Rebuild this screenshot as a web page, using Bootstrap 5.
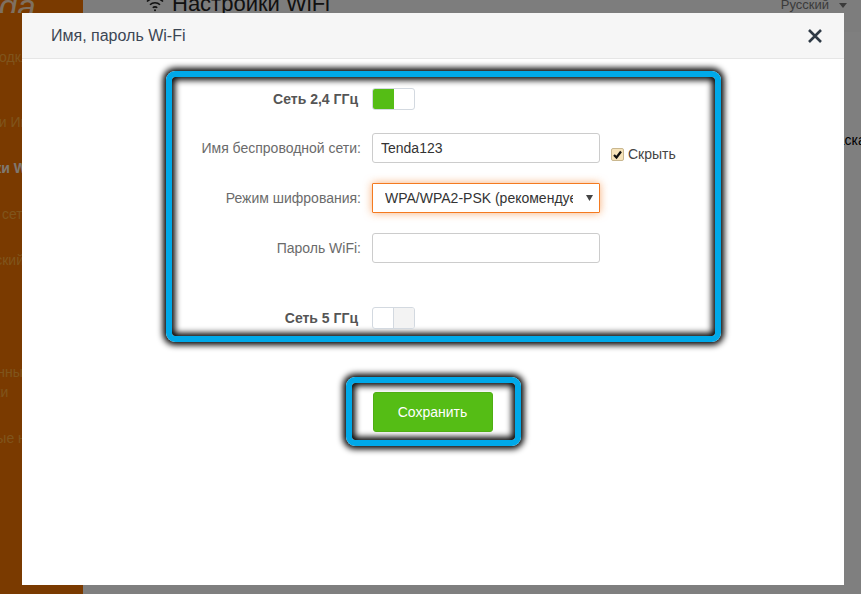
<!DOCTYPE html>
<html lang="ru">
<head>
    <meta charset="UTF-8">
    <title>Настройки WiFi</title>
    <meta name="viewport" content="width=device-width, initial-scale=1">
    <link href="https://cdn.jsdelivr.net/npm/bootstrap@5.3.0/dist/css/bootstrap.min.css" rel="stylesheet">
    <style>
        html, body { height: 100%; overflow: hidden; }
        body { font-family: "Liberation Sans", Arial, sans-serif; font-size: 14px; color: #333; background: #fff; }

        /* page behind the dialog */
        .side-menu { width: 83px; height: 594px; background: #f47400; color: #ffa838; overflow: hidden; white-space: nowrap; flex: none; }
        .side-logo { font-size: 33px; font-style: italic; line-height: 13px; height: 13px; overflow: hidden; margin: 0 0 36px -55px; color: #ffe0c0; }
        .side-item { font-size: 14px; line-height: 16px; height: 46px; }
        .side-item.current { font-weight: 700; color: #fff0e0; }
        .item-tall { height: 65px; }
        .item-short { height: 20px; margin-top: 66px; }
        .shift-a { margin-left: -11px; }
        .shift-b { margin-left: -62px; }
        .shift-c { margin-left: -64px; }
        .shift-d { margin-left: -60px; }
        .shift-e { margin-left: -66px; }
        .shift-f { margin-left: -61px; }
        .shift-g { margin-left: -58px; }
        .shift-h { margin-left: -60px; }
        .main-area { flex: 1; min-width: 0; overflow: hidden; white-space: nowrap; }
        .top-line { height: 33px; background: #fafafa; border-bottom: 1px solid #fff; overflow: hidden; }
        .page-title { font-size: 22px; line-height: 22px; margin: -7px 0 0 63px; color: #222; }
        .lang-pick { margin-left: auto; margin-right: 14px; margin-top: -3px; line-height: 16px; color: #777; font-size: 13px; }
        .lang-caret { display: inline-block; margin-left: 10px; border: 4px solid transparent; border-top: 5px solid #777; border-bottom: 0; vertical-align: middle; }
        .page-note { padding: 99px 0 0 742px; color: #000; line-height: 16px; }

        /* dialog */
        .wifi-dialog { max-width: none; width: 822px; margin: 13px 0 0 22px; }
        .wifi-dialog .modal-content { height: 572px; border: 0; border-radius: 0; }
        .wifi-dialog .modal-header { height: 46px; padding: 0 22px 0 29px; background: #f6f6f6; border-bottom: 1px solid #e6e6e6; border-radius: 0; }
        .dlg-title { font-size: 16px; font-weight: 400; color: #3c4654; margin: 0; line-height: 20px; }
        .dlg-close { background: none; border: 0; padding: 0; line-height: 0; }
        .wifi-dialog .modal-body { padding: 12px 0 0; }

        /* annotation frames */
        .mark-frame { border: 6px solid #00a9e9; border-radius: 9px; box-shadow: 0 0 6px 3px #000, inset 0 0 6px 3px #000; }
        .frame-form { width: 555px; height: 271px; margin-left: 144px; padding-top: 11px; }
        .frame-save { width: 175px; height: 69px; margin-top: 35px; padding: 9px 0 0 21px; }

        /* form rows */
        .form-line { display: flex; gap: 11px; }
        .gap-first { margin-top: 23px; }
        .gap-row { margin-top: 20px; }
        .gap-last { margin-top: 44px; }
        .line-label { width: 189px; flex: none; text-align: right; color: #6b6b6b; line-height: 30px; margin: 0; }
        .line-label.strong { font-weight: 700; color: #555; line-height: 22px; padding-right: 3px; }
        .wifi-input { width: 228px; height: 30px; padding: 0 8px; font-size: 14px; color: #333; border: 1px solid #ccc; border-radius: 3px; box-shadow: none; }
        .wifi-select { width: 228px; height: 30px; padding: 0 26px 0 12px; font-size: 14px; color: #333; border: 1px solid #f47a20; border-radius: 1px; box-shadow: 0 0 8px rgba(244,122,32,.6);
            background-size: 7px 6px; background-position: right 6px center;
            background-image: url("data:image/svg+xml,%3csvg xmlns='http://www.w3.org/2000/svg' viewBox='0 0 7 6'%3e%3cpath fill='%23444' d='M0 0h7L3.500 6z'/%3e%3c/svg%3e"); }
        .wifi-select:focus { border-color: #f47a20; box-shadow: 0 0 8px rgba(244,122,32,.6); }
        .hide-check { margin: 12px 0 0 0; min-height: 0; padding: 0; display: flex; align-items: center; gap: 4px; color: #444; }
        .hide-check .form-check-input { float: none; margin: 0; width: 13px; height: 13px; border: 1px solid #c9b78f; border-radius: 2px; background-color: #f6e3ba; background-size: 13px;
            background-image: url("data:image/svg+xml,%3csvg xmlns='http://www.w3.org/2000/svg' viewBox='0 0 13 13'%3e%3cpath fill='none' stroke='%23111' stroke-width='2.200' d='M3 7l2.500 2.500L10 3.500'/%3e%3c/svg%3e"); }
        .hide-check label { line-height: 16px; }

        /* two part switch */
        .split-toggle { width: 43px; height: 22px; display: flex; border: 1px solid #d3d9e0; border-radius: 3px; overflow: hidden; background: #fff; }
        .split-toggle span { flex: 1; }
        .split-toggle .on-part { background: #55bd15; }
        .split-toggle .off-part { background: #f3f3f3; border-left: 1px solid #d3d9e0; }

        .save-btn { width: 120px; height: 40px; padding: 0; font-size: 14px; color: #fff; background: #55bd15; border: 1px solid #4fae13; border-radius: 3px; }
        .modal-backdrop.show { opacity: .5; }
    </style>
</head>
<body>

<!-- страница под диалогом -->
<div class="d-flex">
    <div class="side-menu">
        <div class="side-logo">Tenda</div>
        <div class="side-item item-tall shift-a">Подключение</div>
        <div class="side-item shift-b">Настройки Интернета</div>
        <div class="side-item current shift-c">Настройки WiFi</div>
        <div class="side-item shift-d">Гостевая сеть</div>
        <div class="side-item shift-e">Родительский контроль</div>
        <div class="side-item item-short shift-f">Расширенные</div>
        <div class="side-item shift-g">настройки</div>
        <div class="side-item shift-h">Системные настройки</div>
    </div>
    <div class="main-area">
        <div class="top-line d-flex align-items-start">
            <div class="page-title d-flex align-items-center gap-2">
                <svg width="18" height="16" viewBox="0 0 18 16" fill="none" stroke="#222" stroke-width="1.600"><path d="M1 5.500a11.500 11.500 0 0 1 16 0"/><path d="M4 8.800a7 7 0 0 1 10 0"/><path d="M6.800 11.800a3 3 0 0 1 4.400 0"/><circle cx="9" cy="14.200" r="1" fill="#222" stroke="none"/></svg>
                <span>Настройки WiFi</span>
            </div>
            <div class="lang-pick">Русский<span class="lang-caret"></span></div>
        </div>
        <div class="page-note">Маска</div>
    </div>
</div>

<div class="modal-backdrop show"></div>

<!-- диалог -->
<div class="modal show d-block" tabindex="-1">
    <div class="modal-dialog wifi-dialog">
        <div class="modal-content">
            <div class="modal-header">
                <h5 class="dlg-title">Имя, пароль Wi-Fi</h5>
                <button type="button" class="dlg-close ms-auto" aria-label="Закрыть">
                    <svg width="14" height="14" viewBox="0 0 14 14" stroke="#2f3a46" stroke-width="2.600"><path d="M1 1l12 12M13 1L1 13"/></svg>
                </button>
            </div>
            <div class="modal-body d-flex flex-column align-items-center">
                <div class="mark-frame frame-form align-self-start">
                    <div class="form-line">
                        <p class="line-label strong">Сеть 2,4 ГГц</p>
                        <div class="split-toggle"><span class="on-part"></span><span></span></div>
                    </div>
                    <div class="form-line gap-first">
                        <label class="line-label" for="ssid">Имя беспроводной сети:</label>
                        <input class="form-control wifi-input" id="ssid" type="text" value="Tenda123">
                        <div class="form-check hide-check">
                            <input class="form-check-input" id="hide" type="checkbox" checked>
                            <label for="hide">Скрыть</label>
                        </div>
                    </div>
                    <div class="form-line gap-row">
                        <label class="line-label" for="mode">Режим шифрования:</label>
                        <select class="form-select wifi-select" id="mode">
                            <option>WPA/WPA2-PSK (рекомендуется)</option>
                        </select>
                    </div>
                    <div class="form-line gap-row">
                        <label class="line-label" for="pass">Пароль WiFi:</label>
                        <input class="form-control wifi-input" id="pass" type="text">
                    </div>
                    <div class="form-line gap-last">
                        <p class="line-label strong">Сеть 5 ГГц</p>
                        <div class="split-toggle"><span></span><span class="off-part"></span></div>
                    </div>
                </div>
                <div class="mark-frame frame-save">
                    <button type="button" class="btn save-btn">Сохранить</button>
                </div>
            </div>
        </div>
    </div>
</div>

<script src="https://cdn.jsdelivr.net/npm/bootstrap@5.3.0/dist/js/bootstrap.bundle.min.js"></script>
</body>
</html>
